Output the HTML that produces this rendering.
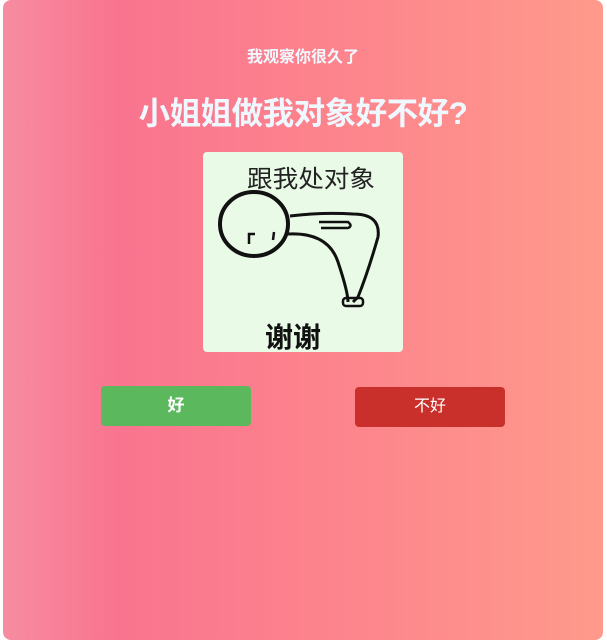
<!DOCTYPE html>
<html><head><meta charset="utf-8"><style>
html,body{margin:0;padding:0;background:#fff;width:607px;height:631px;overflow:hidden}
.card{position:absolute;left:3px;top:0;width:600px;height:640px;border-radius:8px;
background:linear-gradient(to right,#f78ca0 0%,#f9748f 19%,#fd868c 60%,#fe9a8b 100%);
font-family:"Liberation Sans","Noto Sans CJK SC",sans-serif;color:#f0f8ff}
.sub{position:absolute;left:0;width:600px;top:47px;text-align:center;font-size:16px;font-weight:bold;line-height:22px}
.title{position:absolute;left:0;width:600px;top:92px;text-align:center;font-size:31.5px;font-weight:bold;line-height:42px;letter-spacing:-0.5px}
.img{position:absolute;left:200px;top:152px;width:200px;height:200px;border-radius:4px;background:#e9fae6;overflow:hidden}
.btn{position:absolute;width:150px;height:40px;border-radius:4px;text-align:center;line-height:40px;font-size:16px;color:#fff}
.g{left:98px;top:386px;background:#5cb85c;font-weight:bold;font-size:17px}
.r{left:352px;top:387px;background:#c9302c}
</style></head><body>
<div class="card">
<div class="sub">我观察你很久了</div>
<div class="title">小姐姐做我对象好不好?</div>
<div class="img">
<svg width="200" height="200" viewBox="0 0 200 200">
<text x="44" y="35" font-size="24" font-family="Noto Sans CJK SC,sans-serif" fill="#222" textLength="128" lengthAdjust="spacingAndGlyphs">跟我处对象</text>
<ellipse cx="51" cy="72" rx="34" ry="32" fill="none" stroke="#111" stroke-width="4"/>
<path d="M46 92 L46 82 L52 82 M70 88 L71 80" stroke="#111" stroke-width="2.5" fill="none"/>
<path d="M87 64 Q120 60 150 62 Q178 62 175 85 Q165 120 155 145 L150 150 M85 82 Q125 80 135 110 Q145 140 145 150" stroke="#111" stroke-width="3" fill="none"/>
<path d="M116 70 L145 70 Q150 74 145 76 L118 76" stroke="#111" stroke-width="2.5" fill="none"/>
<rect x="140" y="146" width="20" height="8" rx="3" fill="none" stroke="#111" stroke-width="2.5"/>
<text x="62" y="195" font-size="28" font-weight="bold" font-family="Noto Sans CJK SC,sans-serif" fill="#111">谢谢</text>
</svg>
</div>
<div class="btn g">好</div>
<div class="btn r">不好</div>
</div>
</body></html>
